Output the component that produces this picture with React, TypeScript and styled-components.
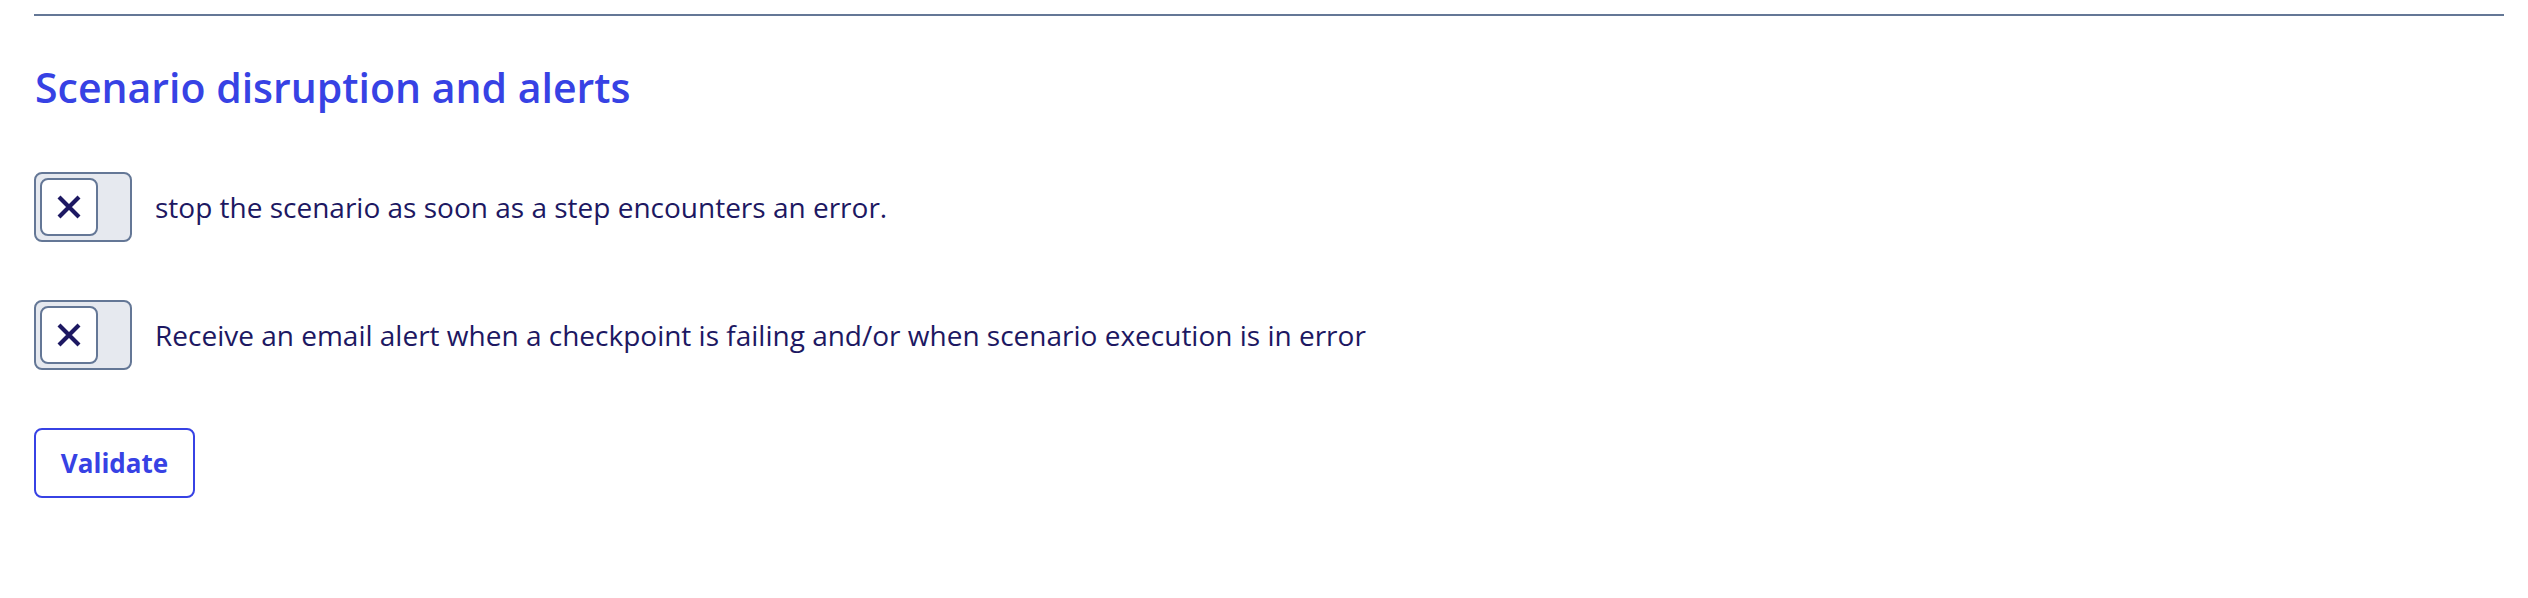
import React, { useState } from 'react';
import styled, { createGlobalStyle } from 'styled-components';

const GlobalStyle = createGlobalStyle`
  html, body {
    margin: 0;
    padding: 0;
    background: #ffffff;
  }
  body {
    font-family: "Open Sans", Lato, "Liberation Sans", sans-serif;
    color: #1d1862;
  }
`;

const Section = styled.section`
  padding: 14px 24px 40px 34px;
`;

const Divider = styled.hr`
  margin: 0;
  border: none;
  height: 2px;
  background: #647796;
`;

const Title = styled.h2`
  margin: 47px 0 0 1px;
  font-size: 41px;
  line-height: 48px;
  font-weight: 600;
  color: #3742e4;
`;

const Options = styled.div`
  display: flex;
  flex-direction: column;
  align-items: flex-start;
  gap: 58px;
  margin-top: 61px;
`;

const OptionRow = styled.label`
  display: flex;
  align-items: center;
  gap: 23px;
  cursor: pointer;
`;

const Track = styled.span<{ $on: boolean }>`
  box-sizing: border-box;
  display: flex;
  justify-content: ${(p) => (p.$on ? 'flex-end' : 'flex-start')};
  align-items: center;
  width: 98px;
  height: 70px;
  padding: 4px;
  border: 2px solid #647796;
  border-radius: 8px;
  background: #e6e9ef;
`;

const Knob = styled.span`
  box-sizing: border-box;
  display: flex;
  align-items: center;
  justify-content: center;
  width: 58px;
  height: 58px;
  border: 2px solid #647796;
  border-radius: 8px;
  background: #ffffff;
  color: #1d1862;
`;

const OptionText = styled.span`
  font-size: 28px;
  line-height: 34px;
  color: #1d1862;
`;

const ValidateButton = styled.button`
  box-sizing: border-box;
  width: 161px;
  height: 70px;
  border: 2px solid #3742e4;
  border-radius: 8px;
  background: #ffffff;
  color: #3742e4;
  font-family: "Open Sans", Lato, "Liberation Sans", sans-serif;
  font-size: 26px;
  font-weight: 700;
  cursor: pointer;
`;

const CrossIcon = () => (
  <svg width="24" height="24" viewBox="0 0 24 24" fill="none">
    <path d="M2 2L22 22M22 2L2 22" stroke="currentColor" strokeWidth="4.2" strokeLinecap="butt" />
  </svg>
);

const Toggle = ({ on }: { on: boolean }) => (
  <Track $on={on}>
    <Knob>{!on && <CrossIcon />}</Knob>
  </Track>
);

const options = [
  { id: 'stop', text: 'stop the scenario as soon as a step encounters an error.' },
  { id: 'alert', text: 'Receive an email alert when a checkpoint is failing and/or when scenario execution is in error' },
];

const App = () => {
  const [values, setValues] = useState<Record<string, boolean>>({ stop: false, alert: false });

  return (
    <>
      <GlobalStyle />
      <Section>
        <Divider />
        <Title>Scenario disruption and alerts</Title>
        <Options>
          {options.map((opt) => (
            <OptionRow key={opt.id} onClick={() => setValues({ ...values, [opt.id]: !values[opt.id] })}>
              <Toggle on={values[opt.id]} />
              <OptionText>{opt.text}</OptionText>
            </OptionRow>
          ))}
          <ValidateButton>Validate</ValidateButton>
        </Options>
      </Section>
    </>
  );
};

export default App;
